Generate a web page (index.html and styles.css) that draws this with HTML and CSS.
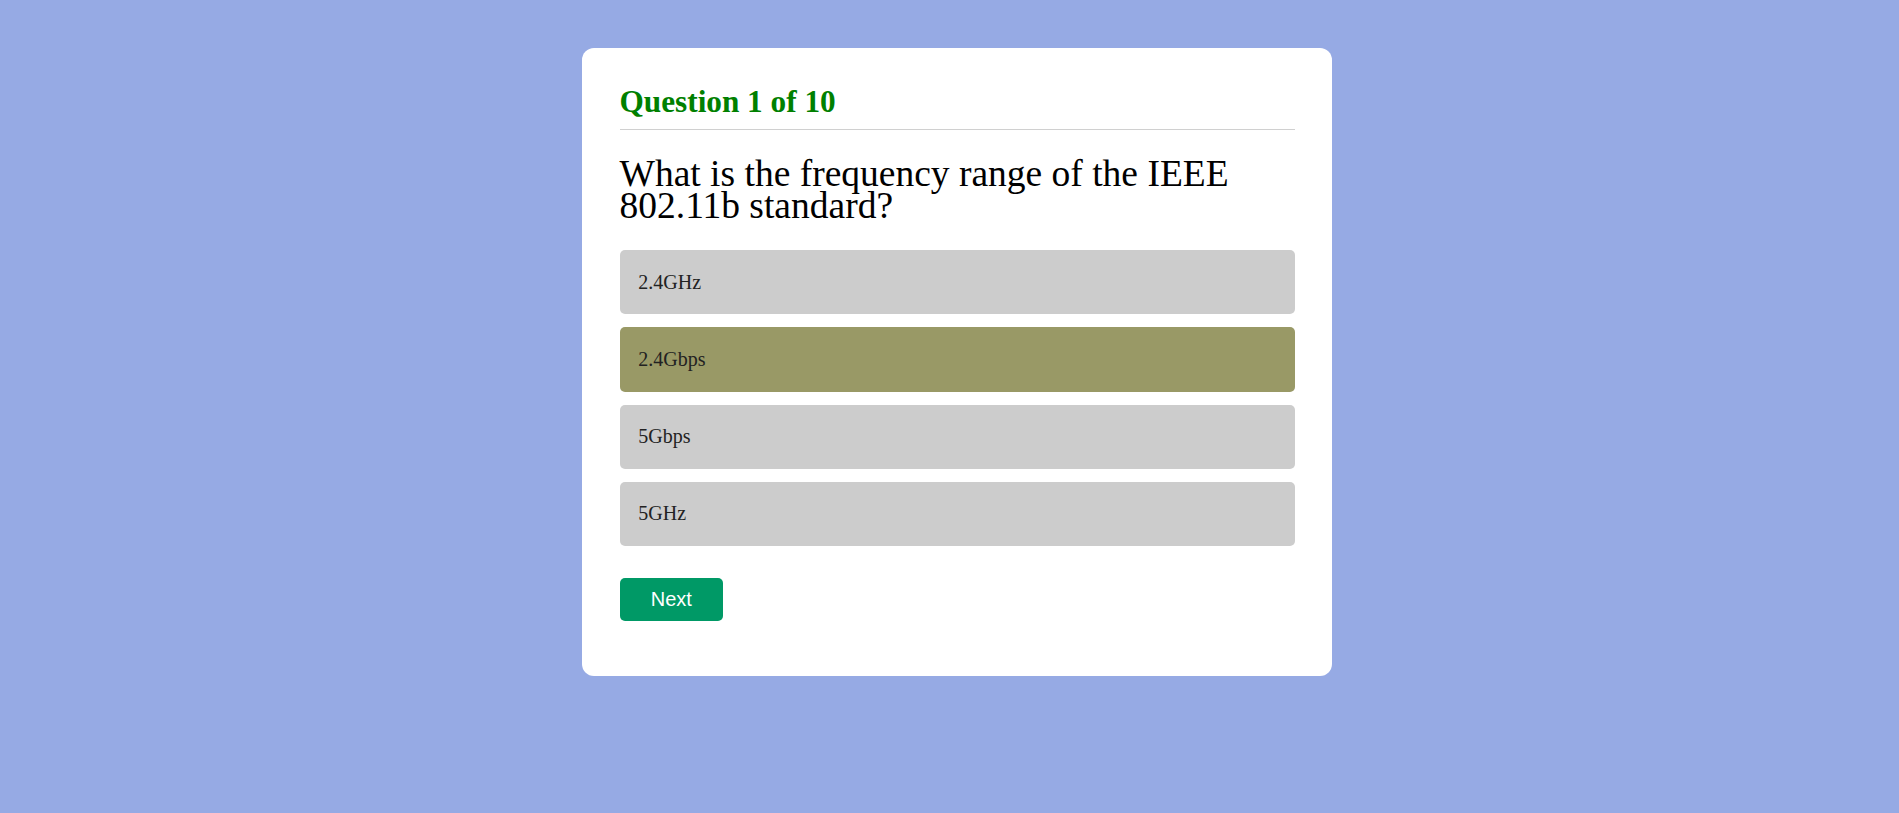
FILE: index.html
```html
<!DOCTYPE html>
<html lang="en">
<head>
<meta charset="utf-8">
<title>Quiz</title>
<link rel="stylesheet" href="styles.css">
</head>
<body>
<div class="app">
  <h1 class="title">Question 1 of 10</h1>
  <div class="quiz">
    <h2 class="question">What is the frequency range of the IEEE 802.11b standard?</h2>
    <div class="answers">
      <button class="answer">2.4GHz</button>
      <button class="answer selected">2.4Gbps</button>
      <button class="answer">5Gbps</button>
      <button class="answer">5GHz</button>
    </div>
    <button class="next">Next</button>
  </div>
</div>
</body>
</html>
```

FILE: styles.css
```css
html, body {
  margin: 0;
  padding: 0;
}
body {
  background: #96aae4;
  font-family: "Liberation Serif", "Times New Roman", serif;
  min-height: 813px;
  padding-left: 15px;
}
.app {
  width: 750px;
  box-sizing: border-box;
  margin: 48px auto 0;
  background: #fff;
  border-radius: 12px;
  padding: 36px 37.5px 37.5px;
}
.title {
  margin: 0;
  font-size: 31.25px;
  line-height: 35px;
  font-weight: bold;
  color: #008000;
  padding-bottom: 10px;
  border-bottom: 1px solid #d0d0d0;
}
.quiz {
  display: flex;
  flex-direction: column;
  align-items: flex-start;
}
.question {
  margin: 27.5px 0 0;
  font-size: 37.5px;
  line-height: 32.5px;
  font-weight: normal;
  color: #000;
  padding-right: 20px;
}
.answers {
  width: 100%;
  margin-top: 27.5px;
  display: flex;
  flex-direction: column;
  gap: 13px;
}
.answer {
  display: block;
  width: 100%;
  text-align: left;
  border: none;
  border-radius: 5px;
  background: #cccccc;
  font-family: "Liberation Serif", "Times New Roman", serif;
  font-size: 20px;
  line-height: 23px;
  color: #222;
  padding: 20.65px 18.75px;
  margin: 0;
}
.answer.selected {
  background: #999966;
}
.next {
  margin-top: 31.5px;
  margin-bottom: 18px;
  border: none;
  border-radius: 5px;
  background: #009966;
  color: #fff;
  font-family: "Liberation Sans", Arial, sans-serif;
  font-size: 20px;
  line-height: 23px;
  padding: 10px 31.25px;
}
```
